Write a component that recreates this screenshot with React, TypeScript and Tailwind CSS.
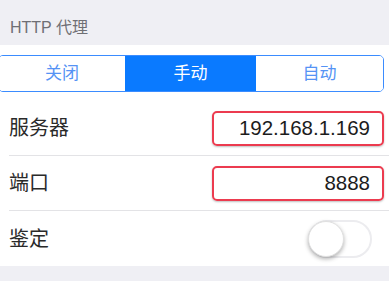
const font = { fontFamily: '"Liberation Sans", "Noto Sans CJK SC", sans-serif' };

function Segmented() {
  const items = ["关闭", "手动", "自动"];
  return (
    <div className="flex h-[37px] ml-[-2px] mr-[5px] rounded-[5px] border border-[#3b8cff] overflow-hidden">
      {items.map((t, i) => (
        <div
          key={t}
          className={
            "flex items-center justify-center text-[17px] " +
            (i === 1 ? "bg-[#0a7aff] text-white w-[131px]" : "bg-white text-[#5593f5]") +
            (i === 0 ? " w-[126px]" : "") +
            (i === 2 ? " flex-1" : "")
          }
        >
          {t}
        </div>
      ))}
    </div>
  );
}

function Field({ value }: { value: string }) {
  return (
    <div className="w-[172px] h-[35px] mr-[5px] rounded-[5px] border-2 border-[#ec3b4f] shadow-[0_1px_2px_rgba(0,0,0,0.25)] flex items-center justify-end pr-[12px] text-[20.5px] text-[#1c1c1c]">
      {value}
    </div>
  );
}

function Row({ label, children, last }: { label: string; children: React.ReactNode; last?: boolean }) {
  return (
    <div className="pl-[9px]">
      <div className={"h-[55px] flex items-center justify-between " + (last ? "" : "border-b border-[#e3e3e6]")}>
        <span className="text-[20px] text-[#2a2a2a]">{label}</span>
        {children}
      </div>
    </div>
  );
}

export default function App() {
  return (
    <div className="w-[389px] h-[281px] bg-[#efeff4] overflow-hidden" style={font}>
      <div className="h-[45px] flex items-end pl-[10px] pb-[5px] text-[16px] text-[#6f6f74]">HTTP 代理</div>
      <div className="bg-white">
        <div className="pt-[10px] pb-[9px]">
          <Segmented />
        </div>
        <Row label="服务器">
          <Field value="192.168.1.169" />
        </Row>
        <Row label="端口">
          <Field value="8888" />
        </Row>
        <Row label="鉴定" last>
          <div className="mr-[17px] w-[64px] h-[38px] rounded-full border-2 border-[#ececef] bg-white relative">
            <div className="absolute left-[-2px] top-[-1px] w-[36px] h-[36px] rounded-full bg-white shadow-[0_2px_4px_rgba(0,0,0,0.3)] border border-[#e0e0e0]" />
          </div>
        </Row>
      </div>
    </div>
  );
}
